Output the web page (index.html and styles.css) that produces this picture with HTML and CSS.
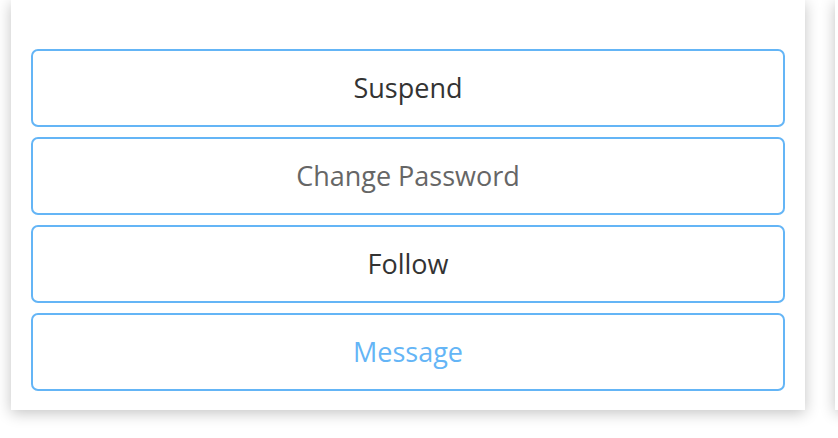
FILE: index.html
```html
<!DOCTYPE html>
<html>
<head>
<meta charset="utf-8">
<link rel="stylesheet" href="styles.css">
</head>
<body>
<div class="row">
  <div class="card">
    <button class="btn btn-dark">Suspend</button>
    <button class="btn btn-gray">Change Password</button>
    <button class="btn btn-dark">Follow</button>
    <button class="btn btn-blue">Message</button>
  </div>
  <div class="card card-next"></div>
</div>
</body>
</html>
```
FILE: styles.css
```css
html, body {
  margin: 0;
  padding: 0;
  background: #ffffff;
}
.row {
  display: flex;
  gap: 30px;
  padding-left: 11px;
  align-items: flex-start;
  height: 438px;
  width: 838px;
  box-sizing: border-box;
  overflow: hidden;
}
.card {
  flex: 0 0 794px;
  box-sizing: border-box;
  background: #fff;
  padding: 49px 20px 19px;
  display: flex;
  flex-direction: column;
  gap: 10px;
  box-shadow: 0 3px 14px rgba(0, 0, 0, 0.24);
}
.card-next {
  height: 410px;
}
.btn {
  box-sizing: border-box;
  height: 78px;
  width: 100%;
  padding: 0 0 2px;
  background: #fff;
  border: 2px solid #64b5f6;
  border-radius: 7px;
  font-family: "Open Sans", Lato, sans-serif;
  font-size: 27px;
  font-weight: 400;
  cursor: pointer;
}
.btn-dark { color: #333333; }
.btn-gray { color: #666666; }
.btn-blue { color: #64b5f6; }
```
